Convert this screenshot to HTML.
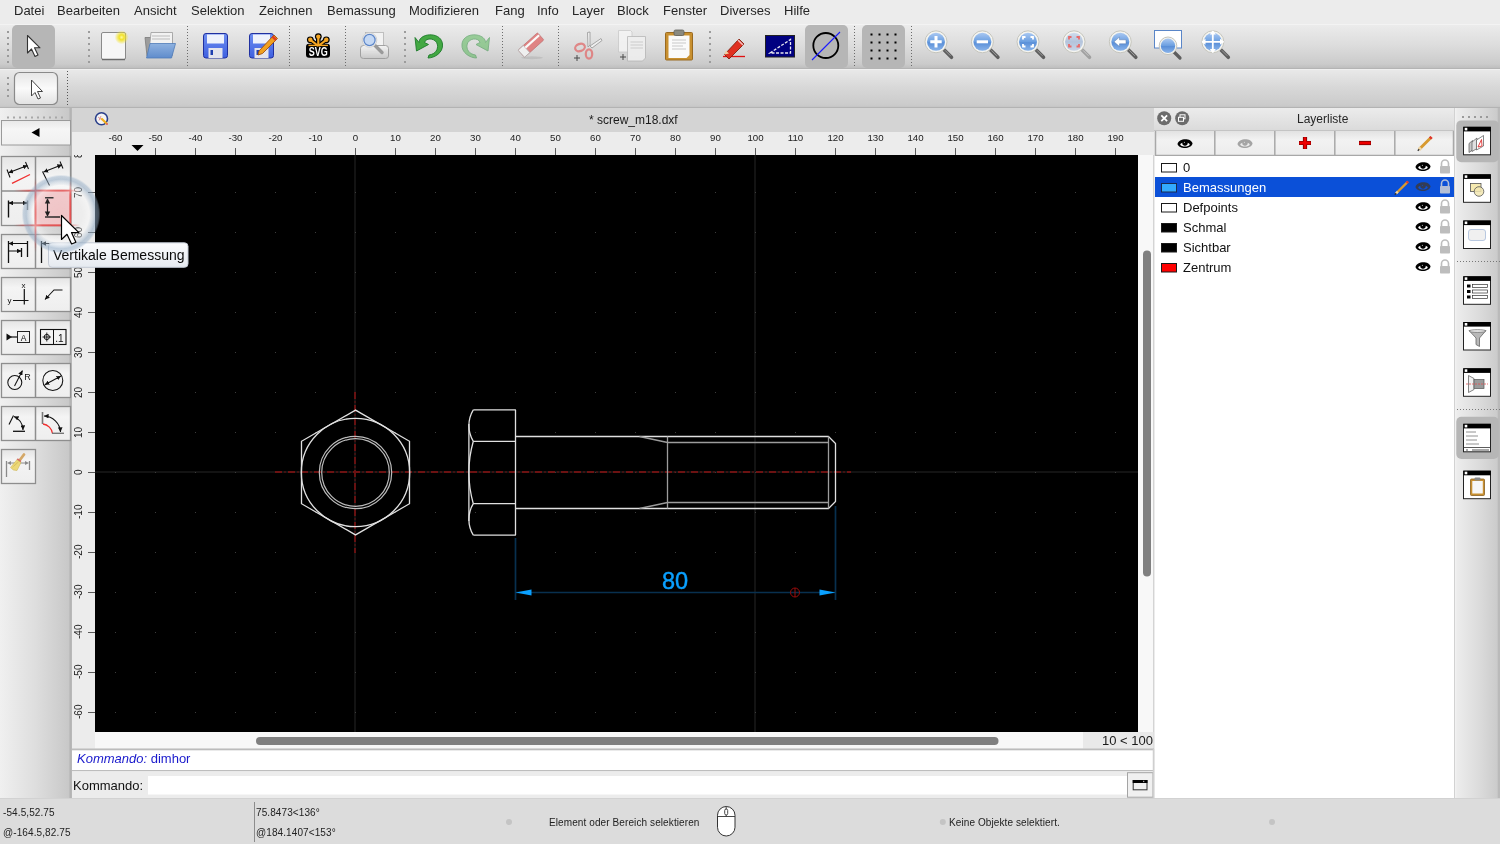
<!DOCTYPE html>
<html><head><meta charset="utf-8">
<style>
*{box-sizing:border-box;margin:0;padding:0}
html,body{width:1500px;height:844px;overflow:hidden;background:#ececec;font-family:"Liberation Sans",sans-serif;color:#222}
.a{position:absolute}
svg{overflow:visible}
#menubar{left:0;top:0;width:1500px;height:24px;background:#ececec}
#menubar span{position:absolute;top:3px;font-size:13px;color:#262626;white-space:nowrap}
#tb1{left:0;top:24px;width:1500px;height:45px;background:linear-gradient(#f7f7f7 0px,#ebebeb 1.5px,#dcdcdc 22px,#cbcbcb 40px,#c0c0c0 43.5px,#b4b4b4 44px,#b4b4b4 45px)}
#tb2{left:0;top:69px;width:1500px;height:39px;background:linear-gradient(#f4f4f4 0px,#e8e8e8 1.5px,#d8d8d8 18px,#cbcbcb 36px,#c6c6c6 37.5px,#b3b3b3 38px,#b3b3b3 39px)}
#leftp{left:0;top:108px;width:72px;height:690px;background:linear-gradient(90deg,#f0f0f0 0px,#dedede 35px,#c8c8c8 69px,#b2b2b2 70px,#bababa 72px)}
#doctitle{left:72px;top:108px;width:1082px;height:24px;background:#d4d4d4}
#hruler{left:72px;top:132px;width:1082px;height:23px;background:#ececec}
#vruler{left:72px;top:155px;width:23px;height:577px;background:#ececec}
#layerp{left:1154px;top:108px;width:300px;height:690px;background:#fff;border-left:1px solid #c8c8c8}
#rightp{left:1454px;top:108px;width:46px;height:690px;background:linear-gradient(90deg,#d0d0d0 0px,#e9e9e9 3px,#e2e2e2 30px,#c9c9c9 46px)}
.rl{position:absolute;top:0px;width:40px;text-align:center;font-size:9.7px;color:#222;line-height:11px}
.vl{position:absolute;left:0.1px;width:14px;height:40px;font-size:10px;color:#222;line-height:14px;writing-mode:vertical-rl;transform:rotate(180deg);text-align:center}
.st{font-size:10px;line-height:12px;color:#222;white-space:nowrap;letter-spacing:0.1px}
body>div,body>svg{will-change:transform}

</style></head>
<body>
<div id="menubar" class="a">
<span style="left:14px">Datei</span>
<span style="left:57px">Bearbeiten</span>
<span style="left:134px">Ansicht</span>
<span style="left:191px">Selektion</span>
<span style="left:259px">Zeichnen</span>
<span style="left:327px">Bemassung</span>
<span style="left:409px">Modifizieren</span>
<span style="left:495px">Fang</span>
<span style="left:537px">Info</span>
<span style="left:572px">Layer</span>
<span style="left:617px">Block</span>
<span style="left:663px">Fenster</span>
<span style="left:720px">Diverses</span>
<span style="left:784px">Hilfe</span>
</div>
<div id="tb1" class="a"></div><div id="tb2" class="a"></div>
<svg class="a" style="left:0;top:0" width="1500" height="108" viewBox="0 0 1500 108"><defs>
<linearGradient id="lensG" x1="0" y1="0" x2="0" y2="1"><stop offset="0" stop-color="#a9c8f2"/><stop offset="0.5" stop-color="#6a9ee0"/><stop offset="0.55" stop-color="#5a8fd8"/><stop offset="1" stop-color="#8ab4ea"/></linearGradient>
<linearGradient id="lensGr" x1="0" y1="0" x2="0" y2="1"><stop offset="0" stop-color="#d0dcec"/><stop offset="0.5" stop-color="#b4c4dc"/><stop offset="1" stop-color="#c8d4e6"/></linearGradient>
<linearGradient id="floppy" x1="0" y1="0" x2="0" y2="1"><stop offset="0" stop-color="#6f8ff0"/><stop offset="1" stop-color="#3d5fe0"/></linearGradient>
<linearGradient id="folderG" x1="0" y1="0" x2="0" y2="1"><stop offset="0" stop-color="#8fb2e0"/><stop offset="1" stop-color="#5f8ccc"/></linearGradient>
<radialGradient id="glow"><stop offset="0" stop-color="#fff9a0"/><stop offset="0.35" stop-color="#f2e22a"/><stop offset="1" stop-color="#f2e22a" stop-opacity="0"/></radialGradient>
</defs>
<path d="M8 31V63" stroke="#9a9a9a" stroke-width="2" stroke-dasharray="2 4"/>
<rect x="12" y="25" width="43" height="43" rx="5" fill="#b6b6b6"/>
<path d="M27.5 35.5V53L31.5 49L35 56.5L38 55L34.5 47.8H40Z" fill="#fff" stroke="#333" stroke-width="1.1" stroke-linejoin="round"/>
<path d="M89 31V64" stroke="#9c9c9c" stroke-width="2" stroke-dasharray="2 4"/>
<path d="M187.5 26V66" stroke="#6c6c6c" stroke-width="1" stroke-dasharray="1 2"/>
<path d="M289.5 26V66" stroke="#6c6c6c" stroke-width="1" stroke-dasharray="1 2"/>
<path d="M345.5 26V66" stroke="#6c6c6c" stroke-width="1" stroke-dasharray="1 2"/>
<path d="M405 31V64" stroke="#9c9c9c" stroke-width="2" stroke-dasharray="2 4"/>
<path d="M502.5 26V66" stroke="#6c6c6c" stroke-width="1" stroke-dasharray="1 2"/>
<path d="M558.5 26V66" stroke="#6c6c6c" stroke-width="1" stroke-dasharray="1 2"/>
<path d="M710 31V64" stroke="#9c9c9c" stroke-width="2" stroke-dasharray="2 4"/>
<path d="M854.5 26V66" stroke="#6c6c6c" stroke-width="1" stroke-dasharray="1 2"/>
<path d="M911.5 26V66" stroke="#6c6c6c" stroke-width="1" stroke-dasharray="1 2"/>
<rect x="101.5" y="32.5" width="24" height="27" rx="1.5" fill="#f6f6f6" stroke="#8a8a8a" stroke-width="1"/><path d="M102 59.5H125" stroke="#6a6a6a" stroke-width="1.5"/><circle cx="121.6" cy="37.3" r="7" fill="url(#glow)"/>
<path d="M145 37.5H153L155 35H172V56H147Z" fill="#9c9c9c" stroke="#7a7a7a" stroke-width="0.8"/><path d="M151 32.5H172.5V52H149Z" fill="#f2f2f2" stroke="#9a9a9a" stroke-width="0.8"/><path d="M152 36H170M152 39H170" stroke="#bbb" stroke-width="1"/><path d="M150 43.5H175.5L171.5 58H146.5Z" fill="url(#folderG)" stroke="#4f7bb8" stroke-width="0.8"/>
<rect x="203.5" y="33.5" width="24" height="24.5" rx="2.5" fill="url(#floppy)" stroke="#2030a0" stroke-width="1"/><rect x="207" y="34.5" width="17" height="9" fill="#eef2fc"/><rect x="208.5" y="48" width="14" height="10" fill="#e4e4ec"/><rect x="210.5" y="50" width="2.5" height="5" fill="#2040b0"/>
<rect x="249.5" y="33.5" width="24" height="24.5" rx="2.5" fill="url(#floppy)" stroke="#2030a0" stroke-width="1"/><rect x="253" y="34.5" width="17" height="9" fill="#eef2fc"/><rect x="254.5" y="48" width="14" height="10" fill="#e4e4ec"/><rect x="256.5" y="50" width="2.5" height="5" fill="#2040b0"/>
<path d="M259 51L274 35L277.5 38.5L262.5 53.5L258 55Z" fill="#f0a020" stroke="#a05010" stroke-width="0.9" stroke-linejoin="round"/><path d="M272.5 36.5L276 40" stroke="#e04020" stroke-width="2.5"/>
<g><path d="M318.3 46L310.3 39.8" stroke="#000" stroke-width="4.6" stroke-linecap="round"/><circle cx="310.3" cy="39.8" r="3.4" fill="#000"/><path d="M318.3 46L318.3 36.6" stroke="#000" stroke-width="4.6" stroke-linecap="round"/><circle cx="318.3" cy="36.6" r="3.4" fill="#000"/><path d="M318.3 46L326.3 39.8" stroke="#000" stroke-width="4.6" stroke-linecap="round"/><circle cx="326.3" cy="39.8" r="3.4" fill="#000"/><rect x="306" y="43.8" width="24" height="14" rx="3" fill="#000"/><path d="M318.3 46L310.3 39.8" stroke="#f5a623" stroke-width="2.2"/><circle cx="310.3" cy="39.8" r="2.2" fill="#f5a623"/><path d="M318.3 46L318.3 36.6" stroke="#f5a623" stroke-width="2.2"/><circle cx="318.3" cy="36.6" r="2.2" fill="#f5a623"/><path d="M318.3 46L326.3 39.8" stroke="#f5a623" stroke-width="2.2"/><circle cx="326.3" cy="39.8" r="2.2" fill="#f5a623"/><path d="M308.5 45.4H328" stroke="#f5a623" stroke-width="1.4"/><text x="318.3" y="56.3" font-family="Liberation Sans" font-weight="bold" font-size="12.5" fill="#fff" text-anchor="middle" textLength="19" lengthAdjust="spacingAndGlyphs">SVG</text></g>
<defs><linearGradient id="prn" x1="0" y1="0" x2="0" y2="1"><stop offset="0" stop-color="#f4f4f4"/><stop offset="1" stop-color="#c8c8c8"/></linearGradient></defs>
<rect x="365.5" y="32.5" width="18" height="16" fill="#f2f2f2" stroke="#b4b4b4" stroke-width="0.8"/><path d="M360.5 48.5Q360.5 45.5 363.5 45.5H385.5Q388.5 45.5 388.5 48.5V56Q388.5 58.5 385.5 58.5H363.5Q360.5 58.5 360.5 56Z" fill="url(#prn)" stroke="#9a9a9a" stroke-width="0.9"/><path d="M363 52H386" stroke="#ddd" stroke-width="1"/><path d="M374.5 45L382 52.5" stroke="#9a9a9a" stroke-width="3.4" stroke-linecap="round"/><circle cx="369.5" cy="40" r="7.3" fill="#f2f2f2" stroke="#c8c8c8" stroke-width="0.8"/><circle cx="369.5" cy="40" r="5.6" fill="#c4d8f4" stroke="#5d86c8" stroke-width="1.3"/>
<path d="M419 42.5C419 33 441 31 442.5 44C443.5 53 434 58 428 58L429 55C436 54 438 49 437.5 45C436.5 38 426 37 424.5 42.5L428.5 44.5L416.5 51L415 37.5L419 42.5Z" fill="#43a843" stroke="#1d7a2a" stroke-width="0.9" stroke-linejoin="round"/>
<g opacity="0.55"><path d="M485.5 42.5C485.5 33 463.5 31 462 44C461 53 470.5 58 476.5 58L475.5 55C468.5 54 466.5 49 467 45C468 38 478.5 37 480 42.5L476 44.5L488 51L489.5 37.5L485.5 42.5Z" fill="#5ab85a" stroke="#2a8a3a" stroke-width="0.9" stroke-linejoin="round"/></g>
<g opacity="0.85"><ellipse cx="532" cy="57.8" rx="11" ry="1.5" fill="#000" opacity="0.1"/><g transform="translate(531 45) rotate(-42)"><rect x="-13" y="-4.8" width="26" height="9.6" rx="1" fill="#e07474" stroke="#b85a5a" stroke-width="0.7"/><rect x="-13" y="-4.8" width="7" height="9.6" fill="#f4f4f4" stroke="#a8a8a8" stroke-width="0.7"/><path d="M-6 -1.8H12.5" stroke="#fff" stroke-width="2.2"/></g></g>
<g opacity="0.85"><path d="M587.5 32.5L590 32L590 45L588 47Z" fill="#f2f2f2" stroke="#888" stroke-width="0.8"/><path d="M590 46L601 38.5L602 40.5L592 48Z" fill="#f2f2f2" stroke="#888" stroke-width="0.8"/><ellipse cx="580" cy="47.5" rx="5" ry="3.6" fill="none" stroke="#e07878" stroke-width="2.2" transform="rotate(-20 580 47.5)"/><ellipse cx="589" cy="54" rx="3.2" ry="4.6" fill="none" stroke="#e07878" stroke-width="2.2"/><path d="M574 58H580M577 55V61" stroke="#333" stroke-width="1"/></g>
<g opacity="0.85"><path d="M618.5 30.5H630.5L632 32V52H618.5Z" fill="#f4f4f4" stroke="#c4c4c4" stroke-width="0.8"/><path d="M627.5 36.5H645.5V58L642.5 61H627.5Z" fill="#f0f0f0" stroke="#b0b0b0" stroke-width="0.8"/><path d="M630.5 42H643M630.5 45H643M630.5 48H643" stroke="#c8c8c8" stroke-width="1"/><path d="M620 57H626M623 54V60" stroke="#333" stroke-width="1"/></g>
<rect x="665.5" y="32.5" width="27" height="27.5" rx="1" fill="#c89030" stroke="#9a6a20" stroke-width="1"/><path d="M668.5 35.5H689.5V55L686.5 58H668.5Z" fill="#fafafa"/><path d="M672 40H686M672 43H686M672 46H683M672 49H686" stroke="#c8c8c8" stroke-width="1"/><rect x="674" y="30" width="10" height="5.5" rx="1.5" fill="#8a8a80" stroke="#60605a" stroke-width="0.8"/>
<path d="M723 56.5H745" stroke="#e01010" stroke-width="1.3"/><path d="M724.5 54.5L739 39L744 44L729 59Z" fill="#e03020" stroke="#802010" stroke-width="0.9" stroke-linejoin="round"/><path d="M724.5 54.5L726 50.5L729 53.5Z" fill="#f0d0a0"/><path d="M738 40L743 45" stroke="#f0c0c0" stroke-width="1.5"/>
<rect x="765.5" y="35.5" width="29" height="21.5" fill="#000080" stroke="#222" stroke-width="1"/><path d="M770 53L790.5 39.5V53Z" fill="none" stroke="#e8e8f0" stroke-width="1.3" stroke-dasharray="3 1.5"/>
<rect x="805" y="25" width="43" height="43" rx="5" fill="#b6b6b6"/><circle cx="825.8" cy="45.5" r="12.5" fill="none" stroke="#000" stroke-width="1.8"/><path d="M812 60L840 32" stroke="#1a1aff" stroke-width="1.1"/>
<rect x="862" y="25" width="43" height="43" rx="5" fill="#b6b6b6"/>
<rect x="870.5" y="33.5" width="2" height="2" fill="#000"/><rect x="870.5" y="41.5" width="2" height="2" fill="#000"/><rect x="870.5" y="49.5" width="2" height="2" fill="#000"/><rect x="870.5" y="57.5" width="2" height="2" fill="#000"/><rect x="878.5" y="33.5" width="2" height="2" fill="#000"/><rect x="878.5" y="41.5" width="2" height="2" fill="#000"/><rect x="878.5" y="49.5" width="2" height="2" fill="#000"/><rect x="878.5" y="57.5" width="2" height="2" fill="#000"/><rect x="886.5" y="33.5" width="2" height="2" fill="#000"/><rect x="886.5" y="41.5" width="2" height="2" fill="#000"/><rect x="886.5" y="49.5" width="2" height="2" fill="#000"/><rect x="886.5" y="57.5" width="2" height="2" fill="#000"/><rect x="894.5" y="33.5" width="2" height="2" fill="#000"/><rect x="894.5" y="41.5" width="2" height="2" fill="#000"/><rect x="894.5" y="49.5" width="2" height="2" fill="#000"/><rect x="894.5" y="57.5" width="2" height="2" fill="#000"/>
<g>
<path d="M943.5 49.3L951.5 57.3" stroke="#5e5e5e" stroke-width="3.6" stroke-linecap="round"/><path d="M945 50.3L950.5 55.8" stroke="#9a9a9a" stroke-width="1"/>
<circle cx="936" cy="41.8" r="11" fill="#f4f4f0" stroke="#c4c4bc" stroke-width="1"/>
<circle cx="936" cy="41.8" r="9" fill="url(#lensG)"/>
<path d="M936 36V47.5M930.3 41.8H941.7" stroke="#fff" stroke-width="3"/>
</g>
<g>
<path d="M989.9 49.3L997.9 57.3" stroke="#5e5e5e" stroke-width="3.6" stroke-linecap="round"/><path d="M991.4 50.3L996.9 55.8" stroke="#9a9a9a" stroke-width="1"/>
<circle cx="982.4" cy="41.8" r="11" fill="#f4f4f0" stroke="#c4c4bc" stroke-width="1"/>
<circle cx="982.4" cy="41.8" r="9" fill="url(#lensG)"/>
<path d="M976.7 41.8H988" stroke="#fff" stroke-width="3"/>
</g>
<g>
<path d="M1035.5 49.3L1043.5 57.3" stroke="#5e5e5e" stroke-width="3.6" stroke-linecap="round"/><path d="M1037 50.3L1042.5 55.8" stroke="#9a9a9a" stroke-width="1"/>
<circle cx="1028" cy="41.8" r="11" fill="#f4f4f0" stroke="#c4c4bc" stroke-width="1"/>
<circle cx="1028" cy="41.8" r="9" fill="url(#lensG)"/>
<path d="M1023 39.5V37H1025.5M1030.5 37H1033V39.5M1033 44V46.5H1030.5M1025.5 46.5H1023V44" stroke="#fff" stroke-width="1.8" fill="none"/>
</g>
<g>
<path d="M1081.5 49.3L1089.5 57.3" stroke="#a0a0a0" stroke-width="3.6" stroke-linecap="round"/><path d="M1083 50.3L1088.5 55.8" stroke="#c8c8c8" stroke-width="1"/>
<circle cx="1074" cy="41.8" r="11" fill="#f4f4f0" stroke="#c4c4bc" stroke-width="1"/>
<circle cx="1074" cy="41.8" r="9" fill="url(#lensGr)"/>
<path d="M1069 39.5V37H1071.5M1076.5 37H1079V39.5M1079 44V46.5H1076.5M1071.5 46.5H1069V44" stroke="#e86a6a" stroke-width="1.8" fill="none"/>
</g>
<g>
<path d="M1127.8 49.3L1135.8 57.3" stroke="#5e5e5e" stroke-width="3.6" stroke-linecap="round"/><path d="M1129.3 50.3L1134.8 55.8" stroke="#9a9a9a" stroke-width="1"/>
<circle cx="1120.3" cy="41.8" r="11" fill="#f4f4f0" stroke="#c4c4bc" stroke-width="1"/>
<circle cx="1120.3" cy="41.8" r="9" fill="url(#lensG)"/>
<path d="M1114 41.8L1119.5 37V39.8H1126V43.8H1119.5V46.5Z" fill="#fff" stroke="#5a7aaa" stroke-width="0.5"/>
</g>
<rect x="1154.5" y="30.5" width="27" height="17.5" fill="#fff" stroke="#5a86c8" stroke-width="1"/>
<path d="M1173.5 51.5L1180 58" stroke="#5e5e5e" stroke-width="3.2" stroke-linecap="round"/><circle cx="1168" cy="45.8" r="8.8" fill="#f4f4f0" stroke="#c4c4bc" stroke-width="1"/><circle cx="1168" cy="45.8" r="7.2" fill="url(#lensG)"/>
<g>
<path d="M1220.3 49.3L1228.3 57.3" stroke="#5e5e5e" stroke-width="3.6" stroke-linecap="round"/><path d="M1221.8 50.3L1227.3 55.8" stroke="#9a9a9a" stroke-width="1"/>
<circle cx="1212.8" cy="41.8" r="11" fill="#f4f4f0" stroke="#c4c4bc" stroke-width="1"/>
<circle cx="1212.8" cy="41.8" r="9" fill="url(#lensG)"/>
<path d="M1212.8 31V52.5M1202 41.8H1223.5" stroke="#fff" stroke-width="1.8"/><path d="M1212.8 30.5L1209.8 34.5H1215.8ZM1212.8 53L1209.8 49H1215.8ZM1201.5 41.8L1205.5 38.8V44.8ZM1224 41.8L1220 38.8V44.8Z" fill="#fff"/>
</g>
<path d="M8 77V100" stroke="#9a9a9a" stroke-width="2" stroke-dasharray="2 4"/>
<rect x="14.5" y="72.5" width="43" height="32" rx="5" fill="url(#btn2)" stroke="#8a8a8a" stroke-width="1.2"/>
<defs><linearGradient id="btn2" x1="0" y1="0" x2="0" y2="1"><stop offset="0" stop-color="#e6e6e6"/><stop offset="0.5" stop-color="#fafafa"/><stop offset="1" stop-color="#e2e2e2"/></linearGradient></defs>
<path d="M31.5 80V96L35 92.5L38 99L40.5 98L37.5 91.5H42.5Z" fill="#fff" stroke="#444" stroke-width="1" stroke-linejoin="round"/>
<path d="M67.5 71V106" stroke="#555" stroke-width="1" stroke-dasharray="1 2"/></svg>
<div id="doctitle" class="a"></div>
<svg class="a" style="left:94px;top:111px" width="16" height="16" viewBox="0 0 16 16"><circle cx="7.5" cy="7.8" r="6" fill="#f4f4f4" stroke="#2a3f8a" stroke-width="1.6"/><path d="M4 6L8 9M5 9.5L7 5" stroke="#d06060" stroke-width="0.6"/><path d="M8 8L12.5 12.5" stroke="#f0b020" stroke-width="2.2" stroke-linecap="round"/><circle cx="13" cy="13" r="1" fill="#e06060"/></svg>
<div class="a" style="left:589px;top:113px;font-size:12px;line-height:14px;color:#1a1a1a;white-space:nowrap">* screw_m18.dxf</div>
<div id="hruler" class="a" style="overflow:hidden">
<span class="rl" style="left:23.5px">-60</span>
<span class="rl" style="left:63.5px">-50</span>
<span class="rl" style="left:103.5px">-40</span>
<span class="rl" style="left:143.5px">-30</span>
<span class="rl" style="left:183.5px">-20</span>
<span class="rl" style="left:223.5px">-10</span>
<span class="rl" style="left:263.5px">0</span>
<span class="rl" style="left:303.5px">10</span>
<span class="rl" style="left:343.5px">20</span>
<span class="rl" style="left:383.5px">30</span>
<span class="rl" style="left:423.5px">40</span>
<span class="rl" style="left:463.5px">50</span>
<span class="rl" style="left:503.5px">60</span>
<span class="rl" style="left:543.5px">70</span>
<span class="rl" style="left:583.5px">80</span>
<span class="rl" style="left:623.5px">90</span>
<span class="rl" style="left:663.5px">100</span>
<span class="rl" style="left:703.5px">110</span>
<span class="rl" style="left:743.5px">120</span>
<span class="rl" style="left:783.5px">130</span>
<span class="rl" style="left:823.5px">140</span>
<span class="rl" style="left:863.5px">150</span>
<span class="rl" style="left:903.5px">160</span>
<span class="rl" style="left:943.5px">170</span>
<span class="rl" style="left:983.5px">180</span>
<span class="rl" style="left:1023.5px">190</span>
<svg class="a" style="left:0;top:0" width="1082" height="23"><path d="M43.5 16V23 M83.5 16V23 M123.5 16V23 M163.5 16V23 M203.5 16V23 M243.5 16V23 M283.5 16V23 M323.5 16V23 M363.5 16V23 M403.5 16V23 M443.5 16V23 M483.5 16V23 M523.5 16V23 M563.5 16V23 M603.5 16V23 M643.5 16V23 M683.5 16V23 M723.5 16V23 M763.5 16V23 M803.5 16V23 M843.5 16V23 M883.5 16V23 M923.5 16V23 M963.5 16V23 M1003.5 16V23 M1043.5 16V23" stroke="#5a5a5a" stroke-width="1"/><path d="M59.5 13H71.5L65.5 19Z" fill="#000"/></svg>
</div>
<div id="vruler" class="a" style="overflow:hidden">
<span class="vl" style="top:576.5px">-70</span>
<span class="vl" style="top:536.5px">-60</span>
<span class="vl" style="top:496.5px">-50</span>
<span class="vl" style="top:456.5px">-40</span>
<span class="vl" style="top:416.5px">-30</span>
<span class="vl" style="top:376.5px">-20</span>
<span class="vl" style="top:336.5px">-10</span>
<span class="vl" style="top:296.5px">0</span>
<span class="vl" style="top:256.5px">10</span>
<span class="vl" style="top:216.5px">20</span>
<span class="vl" style="top:176.5px">30</span>
<span class="vl" style="top:136.5px">40</span>
<span class="vl" style="top:96.5px">50</span>
<span class="vl" style="top:56.5px">60</span>
<span class="vl" style="top:16.5px">70</span>
<span class="vl" style="top:-23.5px">80</span>
<svg class="a" style="left:0;top:0" width="23" height="577"><path d="M16 597.5H23 M16 557.5H23 M16 517.5H23 M16 477.5H23 M16 437.5H23 M16 397.5H23 M16 357.5H23 M16 317.5H23 M16 277.5H23 M16 237.5H23 M16 197.5H23 M16 157.5H23 M16 117.5H23 M16 77.5H23 M16 37.5H23 M16 -2.5H23" stroke="#5a5a5a" stroke-width="1"/></svg>
</div>

<svg class="a" style="left:95px;top:155px" width="1043" height="577" viewBox="95 155 1043 577">
<defs><pattern id="gd" x="355" y="472" width="40" height="40" patternUnits="userSpaceOnUse"><rect width="1" height="1" fill="#3c3c3c"/></pattern></defs>
<rect x="95" y="155" width="1043" height="577" fill="#000"/>
<g stroke="#131313" stroke-width="2" fill="none"><path d="M355 155V732M755 155V732M95 472H1138"/></g>
<rect x="95" y="155" width="1043" height="577" fill="url(#gd)"/>
<g stroke="#6c1212" stroke-width="1.9" fill="none" stroke-dasharray="7 2.5 1 2.5"><path d="M275 472H851"/><path d="M355 392V553"/></g>
<g stroke="#e0e0e0" stroke-width="1.3" fill="none">
<polygon points="355.5,410.1 301.5,441.3 301.5,503.7 355.5,534.9 409.5,503.7 409.5,441.3"/>
<circle cx="355.5" cy="472.5" r="54.2"/>
</g>
<g stroke="#bcbcbc" stroke-width="1.2" fill="none">
<circle cx="355.5" cy="472.5" r="36.2"/>
<circle cx="355.5" cy="472.5" r="33.8"/>
</g>
<g stroke="#e0e0e0" stroke-width="1.3" fill="none" stroke-linejoin="round">
<path d="M473.3 409.9H515.5V535.1H473.3"/>
<path d="M473.3 441.3H515.5M473.3 503.7H515.5"/>
<path d="M473.3 409.9A30.2 30.2 0 0 0 473.3 441.3A114.2 114.2 0 0 0 473.3 503.7A30.2 30.2 0 0 0 473.3 535.1"/>
<path d="M468.9 424V521"/>
<path d="M515.5 436.5H828.5L835.5 443.5V501.5L828.5 508.5H515.5"/>
</g>
<g stroke="#9c9c9c" stroke-width="1.3" fill="none">
<path d="M639.5 436.5L667.5 442.5H828.5M639.5 508.5L667.5 502.5H828.5"/>
<path d="M667.5 436.5V508.5M828.5 436.5V508.5"/>
</g>
<g stroke="#08304f" stroke-width="1.7" fill="none"><path d="M515.5 538V600M835.5 506V600M515.5 592.5H835.5"/></g>
<g fill="#0aa0ff"><path d="M515.5 592.5L531.5 589.5V595.5Z"/><path d="M835.5 592.5L819.5 589.5V595.5Z"/></g>
<text x="675" y="588.5" fill="#0aa0ff" stroke="#0aa0ff" stroke-width="0.45" font-family="Liberation Sans" font-size="23.5" text-anchor="middle">80</text>
<g stroke="#9a0c0c" stroke-width="1" fill="none"><circle cx="795" cy="592.5" r="4.5"/><path d="M795 588V597"/></g>
</svg>
<div id="leftp" class="a"></div>
<svg class="a" style="left:0;top:108px" width="72" height="690" viewBox="0 108 72 690"><defs>
<linearGradient id="lbtn" x1="0" y1="0" x2="0" y2="1"><stop offset="0" stop-color="#e4e4e4"/><stop offset="0.3" stop-color="#f4f4f4"/><stop offset="1" stop-color="#eeeeee"/></linearGradient>
<linearGradient id="backbtn" x1="0" y1="0" x2="0" y2="1"><stop offset="0" stop-color="#e8e8e8"/><stop offset="0.35" stop-color="#f6f6f6"/><stop offset="1" stop-color="#f0f0f0"/></linearGradient>
<marker id="ar" viewBox="0 0 10 10" refX="10" refY="5" markerWidth="4.4" markerHeight="4.4" orient="auto-start-reverse"><path d="M0 0L10 5L0 10Z" fill="#111"/></marker>
</defs>
<path d="M7 117.5H64" stroke="#a8a8a8" stroke-width="2" stroke-dasharray="2 4"/>
<rect x="1.5" y="120.5" width="69" height="24.5" fill="url(#backbtn)" stroke="#9a9a9a" stroke-width="1"/>
<path d="M31.5 132.5L39.5 128V137Z" fill="#000"/>
<rect x="1.5" y="156.5" width="69" height="69.0" fill="url(#lbtn)" stroke="#8e8e8e" stroke-width="1.3"/><path d="M35.5 156.5V225.5" stroke="#8e8e8e" stroke-width="1.5"/><path d="M1.5 191.0H70.5" stroke="#8e8e8e" stroke-width="1.3"/>
<rect x="35.5" y="190.5" width="35" height="35" fill="#f0c4c6" stroke="#e05a5a" stroke-width="1.4"/>
<rect x="1.5" y="234.5" width="69" height="34.0" fill="url(#lbtn)" stroke="#8e8e8e" stroke-width="1.3"/><path d="M35.5 234.5V268.5" stroke="#8e8e8e" stroke-width="1.5"/>
<rect x="1.5" y="277.5" width="69" height="34.0" fill="url(#lbtn)" stroke="#8e8e8e" stroke-width="1.3"/><path d="M35.5 277.5V311.5" stroke="#8e8e8e" stroke-width="1.5"/>
<rect x="1.5" y="320.5" width="69" height="34.0" fill="url(#lbtn)" stroke="#8e8e8e" stroke-width="1.3"/><path d="M35.5 320.5V354.5" stroke="#8e8e8e" stroke-width="1.5"/>
<rect x="1.5" y="363.5" width="69" height="34.0" fill="url(#lbtn)" stroke="#8e8e8e" stroke-width="1.3"/><path d="M35.5 363.5V397.5" stroke="#8e8e8e" stroke-width="1.5"/>
<rect x="1.5" y="406.5" width="69" height="34.0" fill="url(#lbtn)" stroke="#8e8e8e" stroke-width="1.3"/><path d="M35.5 406.5V440.5" stroke="#8e8e8e" stroke-width="1.5"/>
<rect x="1.5" y="449.5" width="34" height="34.0" fill="url(#lbtn)" stroke="#8e8e8e" stroke-width="1.3"/>
<path d="M8.5 172.8L27.5 165.5" stroke="#111" stroke-width="1.05" fill="none" marker-start="url(#ar)" marker-end="url(#ar)"/><path d="M7 169.5L10 177.5M25.5 162L28.5 169" stroke="#111" stroke-width="1.05" fill="none"/><path d="M12 183.3L30 174.5" stroke="#f03030" stroke-width="1.3"/>
<path d="M43.5 172L62 164.8" stroke="#111" stroke-width="1.05" fill="none" marker-start="url(#ar)" marker-end="url(#ar)"/><path d="M42.5 171.5L49.5 185.5M60 161.5L63 168.5" stroke="#111" stroke-width="1.05" fill="none"/>
<path d="M8.5 203H27.5" stroke="#111" stroke-width="1.05" fill="none" marker-start="url(#ar)" marker-end="url(#ar)"/><path d="M8.5 200.5V217.5" stroke="#111" stroke-width="1.4"/><path d="M27.5 200.5V210" stroke="#777" stroke-width="1.4"/>
<path d="M47.5 199V216" stroke="#111" stroke-width="1.2"/><path d="M47.5 198.3L44.8 203.5H50.2ZM47.5 216.7L44.8 211.5H50.2Z" fill="#111"/><path d="M45 197.7H53.5M45 217H60" stroke="#222" stroke-width="1.4"/>
<path d="M8.5 243.5H27.5M8.5 251H21.5" stroke="#111" stroke-width="1.05" fill="none" marker-start="url(#ar)" marker-end="url(#ar)"/><path d="M8.5 241V263M27.5 241V257M21.5 248V257" stroke="#111" stroke-width="1.3"/>
<path d="M41.5 243.5H50" stroke="#111" stroke-width="1.05" fill="none" marker-start="url(#ar)"/><path d="M50 243.5H66" stroke="#333" stroke-width="1.2" stroke-dasharray="1.5 1.5"/><path d="M41.5 241V263" stroke="#111" stroke-width="1.3"/>
<path d="M24.3 289V304.5M13 300.5H28.5" stroke="#111" stroke-width="1.2"/><text x="23.5" y="288" font-size="8" font-family="Liberation Sans" text-anchor="middle" fill="#111">x</text><text x="9.5" y="303" font-size="8" font-family="Liberation Sans" text-anchor="middle" fill="#111">y</text>
<path d="M62.5 290H54L45 299.5" stroke="#111" stroke-width="1.05" fill="none" marker-end="url(#ar)"/>
<path d="M6.5 333.5L12 337L6.5 340.5Z" fill="#111"/><path d="M11 337H17.5" stroke="#111" stroke-width="1.2"/><rect x="17.5" y="331.5" width="12" height="11" fill="none" stroke="#222" stroke-width="1"/><text x="23.5" y="340.5" font-size="8.5" font-family="Liberation Sans" text-anchor="middle" fill="#111">A</text>
<rect x="40.5" y="329.5" width="25.5" height="15" fill="none" stroke="#111" stroke-width="1.1"/><path d="M53.5 329.5V344.5" stroke="#111" stroke-width="1"/><circle cx="46.8" cy="337" r="2.6" fill="none" stroke="#111" stroke-width="1"/><path d="M42.5 337H51M46.8 332.5V341.5" stroke="#111" stroke-width="0.9"/><text x="59.5" y="342" font-size="10" font-family="Liberation Sans" text-anchor="middle" fill="#111">.1</text>
<circle cx="14.8" cy="382.5" r="7" stroke="#111" stroke-width="1.05" fill="none"/><path d="M14.5 386L22.5 370.5" stroke="#111" stroke-width="1.05" fill="none" marker-end="url(#ar)"/><text x="27.5" y="380" font-size="9" font-family="Liberation Sans" text-anchor="middle" fill="#111">R</text>
<circle cx="52.8" cy="380.5" r="10" stroke="#111" stroke-width="1.05" fill="none"/><path d="M44.8 384.8L61 376" stroke="#111" stroke-width="1.05" fill="none" marker-start="url(#ar)" marker-end="url(#ar)"/>
<path d="M9 424.5L13.5 415.5" stroke="#111" stroke-width="1.05" fill="none"/><path d="M14 416.5A15 15 0 0 1 23 430" stroke="#111" stroke-width="1.05" fill="none" marker-start="url(#ar)" marker-end="url(#ar)"/><path d="M13 431.3H25" stroke="#111" stroke-width="1.3"/>
<path d="M42.5 412V424" stroke="#777" stroke-width="1.6"/><path d="M43 424A11 11 0 0 1 52.5 433.5" stroke="#f03030" stroke-width="1.3" fill="none"/><path d="M44 416A17 17 0 0 1 60.5 432" stroke="#111" stroke-width="1.05" fill="none" marker-start="url(#ar)" marker-end="url(#ar)"/><path d="M52 433.3H64" stroke="#777" stroke-width="1.4"/>
<path d="M6.5 461V477M29.5 461V470" stroke="#8a8a8a" stroke-width="1.3"/><path d="M9 463H27" stroke="#8a8a8a" stroke-width="1"/><path d="M7 463L11 461V465ZM29 463L25 461V465Z" fill="#8a8a8a"/><path d="M19.5 460.5L24 454.5" stroke="#d4a868" stroke-width="2.8" stroke-linecap="round"/><path d="M17.2 459L20.8 461.8" stroke="#d86868" stroke-width="1.8"/><path d="M16.8 459.8L21 462.5L17 470.5Q13 471 10.5 467.5Z" fill="#ecd878" stroke="#c8b050" stroke-width="0.5"/><path d="M14 466L18.5 462M12.5 467.5L17.5 462" stroke="#d0b850" stroke-width="0.5"/></svg>
<svg class="a" style="left:0;top:0" width="1500" height="844" viewBox="0 0 1500 844"><defs>
<linearGradient id="ltitle" x1="0" y1="0" x2="0" y2="1"><stop offset="0" stop-color="#ececec"/><stop offset="1" stop-color="#dadada"/></linearGradient>
<linearGradient id="lbtnr" x1="0" y1="0" x2="0" y2="1"><stop offset="0" stop-color="#e2e2e2"/><stop offset="0.35" stop-color="#f2f2f2"/><stop offset="1" stop-color="#ececec"/></linearGradient>
<linearGradient id="pencilG" x1="0" y1="0" x2="1" y2="0"><stop offset="0" stop-color="#f0b040"/><stop offset="1" stop-color="#d89020"/></linearGradient>
</defs>
<rect x="1154" y="108" width="301" height="23" fill="url(#ltitle)"/>
<path d="M1154 130.5H1455" stroke="#c4c4c4" stroke-width="1"/>
<circle cx="1164.2" cy="118.2" r="7" fill="#6c6c6c"/><path d="M1161.3 115.3L1167.1 121.1M1167.1 115.3L1161.3 121.1" stroke="#fff" stroke-width="1.8"/>
<circle cx="1182.2" cy="118.2" r="7" fill="#6c6c6c"/><rect x="1180" y="114.8" width="5" height="4" fill="none" stroke="#fff" stroke-width="1"/><rect x="1178.5" y="117.3" width="5" height="4" fill="#6c6c6c" stroke="#fff" stroke-width="1"/>
<rect x="1155" y="131" width="299" height="25" fill="url(#lbtnr)"/>
<path d="M1155 155.5H1454" stroke="#a8a8a8" stroke-width="1.5"/>
<path d="M1155.5 131V156" stroke="#a8a8a8" stroke-width="1.5"/>
<path d="M1214.8 131V156" stroke="#a8a8a8" stroke-width="1.5"/>
<path d="M1274.8 131V156" stroke="#a8a8a8" stroke-width="1.5"/>
<path d="M1334.8 131V156" stroke="#a8a8a8" stroke-width="1.5"/>
<path d="M1394.8 131V156" stroke="#a8a8a8" stroke-width="1.5"/>
<path d="M1453.5 131V156" stroke="#a8a8a8" stroke-width="1.5"/>
<g transform="translate(1185 143.5) scale(1.0)"><path d="M-7.5 0.5C-6.5 -5.8 6.5 -6 7.5 0C6.5 5.8 -6 6 -7.5 0.5Z" fill="#000"/><path d="M-4.8 1C-3.8 -1.6 3.8 -1.6 4.8 1C3.8 3.8 -3.8 3.8 -4.8 1Z" fill="#fff"/><path d="M-2.6 -1.5A2.6 2.6 0 0 0 2.6 -1.5A2.6 3.2 0 0 1 -2.6 -1.5Z" fill="#000"/><circle cx="0" cy="-0.5" r="2.7" fill="#000"/><circle cx="-0.6" cy="-1.2" r="0.6" fill="#fff" opacity="0.7"/></g>
<g transform="translate(1245 143.5) scale(1.0)"><path d="M-7.5 0.5C-6.5 -5.8 6.5 -6 7.5 0C6.5 5.8 -6 6 -7.5 0.5Z" fill="#a4a4a4"/><path d="M-4.8 1C-3.8 -1.6 3.8 -1.6 4.8 1C3.8 3.8 -3.8 3.8 -4.8 1Z" fill="#ececec"/><path d="M-2.6 -1.5A2.6 2.6 0 0 0 2.6 -1.5A2.6 3.2 0 0 1 -2.6 -1.5Z" fill="#a4a4a4"/><circle cx="0" cy="-0.5" r="2.7" fill="#a4a4a4"/><circle cx="-0.6" cy="-1.2" r="0.6" fill="#ececec" opacity="0.7"/></g>
<path d="M1305 137V149M1299 143H1311" stroke="#6a0000" stroke-width="4.2"/><path d="M1305 137.3V148.7M1299.3 143H1310.7" stroke="#ee0000" stroke-width="2.8"/>
<path d="M1359 143H1371" stroke="#6a0000" stroke-width="4.2"/><path d="M1359.3 143H1370.7" stroke="#ee0000" stroke-width="2.8"/>
<path d="M1419 149.5L1431.5 137" stroke="#d89a30" stroke-width="3" stroke-linecap="butt"/><path d="M1419 149.5L1420.875 147.625" stroke="#f0d8a8" stroke-width="3"/><path d="M1430.0 138.5L1431.5 137" stroke="#e03030" stroke-width="3"/><path d="M1419.2 149.3L1417.8 150.7" stroke="#333" stroke-width="1.3"/>
<rect x="1155" y="156" width="299" height="642" fill="#fff"/>
<rect x="1155" y="177" width="299" height="20" fill="#0b50d8"/>
<rect x="1161.5" y="163.5" width="15" height="8.5" fill="#fff" stroke="#1a1a1a" stroke-width="1"/>
<text x="1183" y="172" font-family="Liberation Sans" font-size="13" fill="#111">0</text>
<g transform="translate(1423 166.5) scale(1.0)"><path d="M-7.5 0.5C-6.5 -5.8 6.5 -6 7.5 0C6.5 5.8 -6 6 -7.5 0.5Z" fill="#000"/><path d="M-4.8 1C-3.8 -1.6 3.8 -1.6 4.8 1C3.8 3.8 -3.8 3.8 -4.8 1Z" fill="#fff"/><path d="M-2.6 -1.5A2.6 2.6 0 0 0 2.6 -1.5A2.6 3.2 0 0 1 -2.6 -1.5Z" fill="#000"/><circle cx="0" cy="-0.5" r="2.7" fill="#000"/><circle cx="-0.6" cy="-1.2" r="0.6" fill="#fff" opacity="0.7"/></g>
<g><path d="M1441.5 166.5V163.5A3.5 3.5 0 0 1 1448.5 163.5V166.5" fill="none" stroke="#bdbdbd" stroke-width="1.6"/><rect x="1440" y="166" width="10" height="7.5" rx="0.8" fill="#bdbdbd"/></g>
<rect x="1161.5" y="183.5" width="15" height="8.5" fill="#33aaff" stroke="#1a2a50" stroke-width="1"/>
<text x="1183" y="192" font-family="Liberation Sans" font-size="13" fill="#fff">Bemassungen</text>
<path d="M1396 193.5L1408 181.5" stroke="#d89a30" stroke-width="2.4" stroke-linecap="butt"/><path d="M1396 193.5L1397.8 191.7" stroke="#f0d8a8" stroke-width="2.4"/><path d="M1406.56 182.94L1408 181.5" stroke="#e03030" stroke-width="2.4"/><path d="M1396.2 193.3L1394.8 194.7" stroke="#333" stroke-width="1.3"/>
<g transform="translate(1423 186.5) scale(1.0)"><path d="M-7.5 0.5C-6.5 -5.8 6.5 -6 7.5 0C6.5 5.8 -6 6 -7.5 0.5Z" fill="#333c55"/><path d="M-4.8 1C-3.8 -1.6 3.8 -1.6 4.8 1C3.8 3.8 -3.8 3.8 -4.8 1Z" fill="#0b50d8"/><path d="M-2.6 -1.5A2.6 2.6 0 0 0 2.6 -1.5A2.6 3.2 0 0 1 -2.6 -1.5Z" fill="#333c55"/><circle cx="0" cy="-0.5" r="2.7" fill="#333c55"/><circle cx="-0.6" cy="-1.2" r="0.6" fill="#0b50d8" opacity="0.7"/></g>
<g><path d="M1441.5 186.5V183.5A3.5 3.5 0 0 1 1448.5 183.5V186.5" fill="none" stroke="#b3bfd6" stroke-width="1.6"/><rect x="1440" y="186" width="10" height="7.5" rx="0.8" fill="#b3bfd6"/></g>
<rect x="1161.5" y="203.5" width="15" height="8.5" fill="#fff" stroke="#1a1a1a" stroke-width="1"/>
<text x="1183" y="212" font-family="Liberation Sans" font-size="13" fill="#111">Defpoints</text>
<g transform="translate(1423 206.5) scale(1.0)"><path d="M-7.5 0.5C-6.5 -5.8 6.5 -6 7.5 0C6.5 5.8 -6 6 -7.5 0.5Z" fill="#000"/><path d="M-4.8 1C-3.8 -1.6 3.8 -1.6 4.8 1C3.8 3.8 -3.8 3.8 -4.8 1Z" fill="#fff"/><path d="M-2.6 -1.5A2.6 2.6 0 0 0 2.6 -1.5A2.6 3.2 0 0 1 -2.6 -1.5Z" fill="#000"/><circle cx="0" cy="-0.5" r="2.7" fill="#000"/><circle cx="-0.6" cy="-1.2" r="0.6" fill="#fff" opacity="0.7"/></g>
<g><path d="M1441.5 206.5V203.5A3.5 3.5 0 0 1 1448.5 203.5V206.5" fill="none" stroke="#bdbdbd" stroke-width="1.6"/><rect x="1440" y="206" width="10" height="7.5" rx="0.8" fill="#bdbdbd"/></g>
<rect x="1161.5" y="223.5" width="15" height="8.5" fill="#000" stroke="#1a1a1a" stroke-width="1"/>
<text x="1183" y="232" font-family="Liberation Sans" font-size="13" fill="#111">Schmal</text>
<g transform="translate(1423 226.5) scale(1.0)"><path d="M-7.5 0.5C-6.5 -5.8 6.5 -6 7.5 0C6.5 5.8 -6 6 -7.5 0.5Z" fill="#000"/><path d="M-4.8 1C-3.8 -1.6 3.8 -1.6 4.8 1C3.8 3.8 -3.8 3.8 -4.8 1Z" fill="#fff"/><path d="M-2.6 -1.5A2.6 2.6 0 0 0 2.6 -1.5A2.6 3.2 0 0 1 -2.6 -1.5Z" fill="#000"/><circle cx="0" cy="-0.5" r="2.7" fill="#000"/><circle cx="-0.6" cy="-1.2" r="0.6" fill="#fff" opacity="0.7"/></g>
<g><path d="M1441.5 226.5V223.5A3.5 3.5 0 0 1 1448.5 223.5V226.5" fill="none" stroke="#bdbdbd" stroke-width="1.6"/><rect x="1440" y="226" width="10" height="7.5" rx="0.8" fill="#bdbdbd"/></g>
<rect x="1161.5" y="243.5" width="15" height="8.5" fill="#000" stroke="#1a1a1a" stroke-width="1"/>
<text x="1183" y="252" font-family="Liberation Sans" font-size="13" fill="#111">Sichtbar</text>
<g transform="translate(1423 246.5) scale(1.0)"><path d="M-7.5 0.5C-6.5 -5.8 6.5 -6 7.5 0C6.5 5.8 -6 6 -7.5 0.5Z" fill="#000"/><path d="M-4.8 1C-3.8 -1.6 3.8 -1.6 4.8 1C3.8 3.8 -3.8 3.8 -4.8 1Z" fill="#fff"/><path d="M-2.6 -1.5A2.6 2.6 0 0 0 2.6 -1.5A2.6 3.2 0 0 1 -2.6 -1.5Z" fill="#000"/><circle cx="0" cy="-0.5" r="2.7" fill="#000"/><circle cx="-0.6" cy="-1.2" r="0.6" fill="#fff" opacity="0.7"/></g>
<g><path d="M1441.5 246.5V243.5A3.5 3.5 0 0 1 1448.5 243.5V246.5" fill="none" stroke="#bdbdbd" stroke-width="1.6"/><rect x="1440" y="246" width="10" height="7.5" rx="0.8" fill="#bdbdbd"/></g>
<rect x="1161.5" y="263.5" width="15" height="8.5" fill="#ff0000" stroke="#1a1a1a" stroke-width="1"/>
<text x="1183" y="272" font-family="Liberation Sans" font-size="13" fill="#111">Zentrum</text>
<g transform="translate(1423 266.5) scale(1.0)"><path d="M-7.5 0.5C-6.5 -5.8 6.5 -6 7.5 0C6.5 5.8 -6 6 -7.5 0.5Z" fill="#000"/><path d="M-4.8 1C-3.8 -1.6 3.8 -1.6 4.8 1C3.8 3.8 -3.8 3.8 -4.8 1Z" fill="#fff"/><path d="M-2.6 -1.5A2.6 2.6 0 0 0 2.6 -1.5A2.6 3.2 0 0 1 -2.6 -1.5Z" fill="#000"/><circle cx="0" cy="-0.5" r="2.7" fill="#000"/><circle cx="-0.6" cy="-1.2" r="0.6" fill="#fff" opacity="0.7"/></g>
<g><path d="M1441.5 266.5V263.5A3.5 3.5 0 0 1 1448.5 263.5V266.5" fill="none" stroke="#bdbdbd" stroke-width="1.6"/><rect x="1440" y="266" width="10" height="7.5" rx="0.8" fill="#bdbdbd"/></g>
<path d="M1454.5 108V798" stroke="#d2d2d2" stroke-width="1"/></svg>
<div class="a" style="left:1297px;top:112px;font-size:12px;color:#262626;white-space:nowrap">Layerliste</div>
<svg class="a" style="left:0;top:0" width="1500" height="844" viewBox="0 0 1500 844"><rect x="1138" y="155" width="16" height="577" fill="#f8f8f8"/><path d="M1153.5 155V749" stroke="#d4d4d4" stroke-width="1"/>
<rect x="1143" y="250.5" width="8" height="326" rx="4" fill="#808080"/>
<rect x="95" y="732" width="988" height="16.5" fill="#f8f8f8"/>
<rect x="72" y="732" width="23" height="16.5" fill="#ececec"/>
<rect x="256" y="737" width="742.5" height="8" rx="4" fill="#808080"/>
<rect x="1083" y="732" width="70.5" height="16.5" fill="#e9e9e9"/>
<rect x="72" y="748.5" width="1082" height="2" fill="#bcbcbc"/>
<rect x="72" y="750.5" width="1081" height="20" fill="#fff"/>
<path d="M72 770.6H1153" stroke="#bdbdbd" stroke-width="1.2"/>
<rect x="72" y="771.2" width="1081" height="26.8" fill="#ececec"/>
<rect x="148" y="776" width="979" height="18.5" fill="#fff"/>
<rect x="1127.5" y="772.7" width="25.5" height="24.5" fill="#f0f0f0" stroke="#a4a4a4" stroke-width="1"/>
<rect x="1133.2" y="780.5" width="13.8" height="9.3" fill="#efefef" stroke="#333" stroke-width="1"/><rect x="1132.7" y="780" width="14.8" height="3" fill="#000"/><rect x="1143" y="780.8" width="1.3" height="1.3" fill="#aaa"/>
<path d="M1153.5 749V798" stroke="#cfcfcf" stroke-width="1.5"/>
<rect x="0" y="798" width="1500" height="46" fill="#dcdcdc"/>
<path d="M0 798.5H1500" stroke="#d2d2d2" stroke-width="1"/>
<path d="M254.5 802V842" stroke="#8c8c8c" stroke-width="1"/>
<circle cx="509" cy="822" r="3" fill="#c4c4c4"/><circle cx="942.8" cy="822" r="3" fill="#c4c4c4"/><circle cx="1272" cy="822" r="3" fill="#c4c4c4"/>
<rect x="717.5" y="806.5" width="17.5" height="29.5" rx="8.75" fill="#fff" stroke="#333" stroke-width="1"/><path d="M717.5 816.5H735M726.2 806.5V816.5" stroke="#333" stroke-width="0.9"/><rect x="724.7" y="809" width="3" height="6" rx="1.5" fill="#fff" stroke="#333" stroke-width="0.9"/></svg>

<div class="a" style="left:1083px;top:733px;width:70px;text-align:right;font-size:13px;line-height:15px;color:#1a1a1a;white-space:nowrap">10 &lt; 100</div>
<div class="a" style="left:77px;top:751px;font-size:13px;line-height:15px;color:#1a1acc;white-space:nowrap"><i>Kommando:</i> dimhor</div>
<div class="a" style="left:73px;top:778px;font-size:13px;line-height:15px;color:#111;white-space:nowrap">Kommando:</div>
<div class="a st" style="left:2.5px;top:807px">-54.5,52.75</div>
<div class="a st" style="left:2.5px;top:827px">@-164.5,82.75</div>
<div class="a st" style="left:256px;top:807px">75.8473&lt;136°</div>
<div class="a st" style="left:256px;top:827px">@184.1407&lt;153°</div>
<div class="a st" style="left:549px;top:817px">Element oder Bereich selektieren</div>
<div class="a st" style="left:949px;top:817px">Keine Objekte selektiert.</div>

<svg class="a" style="left:0;top:0" width="1500" height="844" viewBox="0 0 1500 844"><defs><linearGradient id="rpg" x1="0" y1="0" x2="1" y2="0"><stop offset="0" stop-color="#f2f2f2"/><stop offset="0.05" stop-color="#ececec"/><stop offset="0.5" stop-color="#dddddd"/><stop offset="0.94" stop-color="#cbcbcb"/><stop offset="0.955" stop-color="#bababa"/><stop offset="1" stop-color="#bababa"/></linearGradient></defs>
<rect x="1455" y="108" width="45" height="690" fill="url(#rpg)"/>
<path d="M1462 117H1490" stroke="#9a9a9a" stroke-width="2" stroke-dasharray="2 4"/>
<path d="M1457 261.5H1500M1457 409.5H1500" stroke="#777" stroke-width="1" stroke-dasharray="1 2"/>
<rect x="1456.3" y="120.4" width="42.5" height="41.8" rx="5" fill="#b6b6b6"/>
<rect x="1456.3" y="416.8" width="42.5" height="42.2" rx="5" fill="#b6b6b6"/>
<g><rect x="1463.5" y="127.3" width="27" height="27.5" fill="#fff" stroke="#222" stroke-width="1"/><rect x="1463.5" y="126.8" width="27.3" height="4.6" fill="#000"/><rect x="1464.7" y="127.8" width="2.6" height="2.6" fill="#fff"/><path d="M1469 143.5L1472.5 140.5V150L1469 152.5Z" fill="#c8c8c8" stroke="#555" stroke-width="0.7"/><path d="M1472 142L1477 138V148.5L1472 151.5Z" fill="#e0e0e0" stroke="#555" stroke-width="0.7"/><path d="M1476.5 140L1483.5 135.5V146L1476.5 150Z" fill="#fff" stroke="#555" stroke-width="0.7"/><path d="M1478 147L1481.5 139.5L1482 146Z" fill="none" stroke="#e03030" stroke-width="0.9"/></g>
<g><rect x="1463.5" y="174.8" width="27" height="27.5" fill="#fff" stroke="#222" stroke-width="1"/><rect x="1463.5" y="174.3" width="27.3" height="4.6" fill="#000"/><rect x="1464.7" y="175.3" width="2.6" height="2.6" fill="#fff"/><rect x="1470.5" y="183.5" width="10.5" height="8" fill="#f6eab0" stroke="#555" stroke-width="0.8"/><circle cx="1479" cy="191.5" r="4.8" fill="#f2e6b0" fill-opacity="0.85" stroke="#555" stroke-width="0.8"/></g>
<g><rect x="1463.5" y="221.0" width="27" height="27.5" fill="#fff" stroke="#222" stroke-width="1"/><rect x="1463.5" y="220.5" width="27.3" height="4.6" fill="#000"/><rect x="1464.7" y="221.5" width="2.6" height="2.6" fill="#fff"/><rect x="1468.5" y="229.5" width="17" height="11" rx="2.5" fill="#f0f0f0" stroke="#b8c8e0" stroke-width="1"/></g>
<g><rect x="1463.5" y="276.8" width="27" height="27.5" fill="#fff" stroke="#222" stroke-width="1"/><rect x="1463.5" y="276.3" width="27.3" height="4.6" fill="#000"/><rect x="1464.7" y="277.3" width="2.6" height="2.6" fill="#fff"/><rect x="1467" y="284.5" width="3.5" height="3" fill="#000"/><rect x="1467" y="290" width="3.5" height="3" fill="#000"/><rect x="1467" y="295.5" width="3.5" height="3" fill="#000"/><rect x="1472.5" y="284.5" width="15" height="3" fill="none" stroke="#333" stroke-width="0.7"/><rect x="1472.5" y="290" width="15" height="3" fill="none" stroke="#333" stroke-width="0.7"/><rect x="1472.5" y="295.5" width="15" height="3" fill="none" stroke="#333" stroke-width="0.7"/></g>
<g><rect x="1463.5" y="322.5" width="27" height="27.5" fill="#fff" stroke="#222" stroke-width="1"/><rect x="1463.5" y="322" width="27.3" height="4.6" fill="#000"/><rect x="1464.7" y="323" width="2.6" height="2.6" fill="#fff"/><path d="M1469 330.5H1486L1479.5 338V346.5L1476 344.5V338Z" fill="#b8b8b8" stroke="#666" stroke-width="0.8"/><ellipse cx="1477.5" cy="331" rx="8.5" ry="1.5" fill="#ddd" stroke="#666" stroke-width="0.6"/></g>
<g><rect x="1463.5" y="368.8" width="27" height="27.5" fill="#fff" stroke="#222" stroke-width="1"/><rect x="1463.5" y="368.3" width="27.3" height="4.6" fill="#000"/><rect x="1464.7" y="369.3" width="2.6" height="2.6" fill="#fff"/><path d="M1468.5 375.5L1474 378.5V389.5L1468.5 392.5Z" fill="#f0f0f0" stroke="#666" stroke-width="0.8"/><rect x="1474" y="379.5" width="10" height="9" fill="#9a9a9a" stroke="#555" stroke-width="0.7"/><path d="M1466 384H1488" stroke="#e05050" stroke-width="0.8" stroke-dasharray="2 1"/></g>
<g><rect x="1463.5" y="424.3" width="27" height="27.5" fill="#fff" stroke="#222" stroke-width="1"/><rect x="1463.5" y="423.8" width="27.3" height="4.6" fill="#000"/><rect x="1464.7" y="424.8" width="2.6" height="2.6" fill="#fff"/><path d="M1466 432H1476M1466 436H1478M1466 440H1477M1466 444H1479" stroke="#777" stroke-width="0.8"/><path d="M1463.5 447.5H1490.5" stroke="#333" stroke-width="0.8"/><path d="M1466 450H1468M1472 450H1489" stroke="#555" stroke-width="1"/></g>
<g><rect x="1463.5" y="471.2" width="27" height="27.5" fill="#fff" stroke="#222" stroke-width="1"/><rect x="1463.5" y="470.7" width="27.3" height="4.6" fill="#000"/><rect x="1464.7" y="471.7" width="2.6" height="2.6" fill="#fff"/><rect x="1470.5" y="479" width="14" height="16.5" rx="1" fill="#c89030" stroke="#8a6020" stroke-width="0.8"/><rect x="1472.3" y="481" width="10.5" height="12.5" fill="#f6f6f6"/><rect x="1474.5" y="477.5" width="6" height="3" rx="1" fill="#888"/></g></svg>
<svg class="a" style="left:0;top:0" width="1500" height="844" viewBox="0 0 1500 844"><defs>
<radialGradient id="halo" cx="61" cy="214" r="39.5" gradientUnits="userSpaceOnUse">
<stop offset="0" stop-color="#ffffff" stop-opacity="0"/>
<stop offset="0.55" stop-color="#ffffff" stop-opacity="0.1"/>
<stop offset="0.72" stop-color="#ffffff" stop-opacity="0.4"/>
<stop offset="0.8" stop-color="#b4c6d8" stop-opacity="0.35"/>
<stop offset="0.88" stop-color="#8ea8c2" stop-opacity="0.55"/>
<stop offset="0.95" stop-color="#90aac4" stop-opacity="0.45"/>
<stop offset="1" stop-color="#b0c4d8" stop-opacity="0"/>
</radialGradient>
<linearGradient id="redh" x1="0" y1="0" x2="1" y2="0"><stop offset="0" stop-color="#e04848" stop-opacity="0"/><stop offset="0.3" stop-color="#e04848" stop-opacity="0.9"/><stop offset="0.75" stop-color="#e04848" stop-opacity="0.9"/><stop offset="1" stop-color="#e04848" stop-opacity="0"/></linearGradient>
<linearGradient id="redv" x1="0" y1="0" x2="0" y2="1"><stop offset="0" stop-color="#e04848" stop-opacity="0"/><stop offset="0.3" stop-color="#e04848" stop-opacity="0.9"/><stop offset="0.7" stop-color="#e04848" stop-opacity="0.9"/><stop offset="1" stop-color="#e04848" stop-opacity="0"/></linearGradient>
<linearGradient id="tipg" x1="0" y1="0" x2="0" y2="1"><stop offset="0" stop-color="#fbfcfe"/><stop offset="1" stop-color="#e6eaf0"/></linearGradient>
</defs>
<rect x="14" y="189.7" width="66" height="1.8" fill="url(#redh)"/><rect x="14" y="224.4" width="66" height="1.8" fill="url(#redh)"/><rect x="34.6" y="178" width="1.8" height="74" fill="url(#redv)"/><rect x="69.4" y="180" width="1.8" height="56" fill="url(#redv)"/>
<rect x="48.5" y="242.8" width="139.5" height="24.5" rx="3.5" fill="url(#tipg)" stroke="#c4cad4" stroke-width="1"/>
<text x="53" y="260" font-family="Liberation Sans" font-size="14" fill="#0a0a0a">Vertikale Bemessung</text>
<circle cx="61" cy="214" r="39.5" fill="url(#halo)"/>
<path d="M61.5 215.5V239.5L67 234.3L71.6 244L75.9 242.2L71.5 232.6H78.9Z" fill="#fff" stroke="#000" stroke-width="1.2" stroke-linejoin="round"/></svg>
</body></html>
